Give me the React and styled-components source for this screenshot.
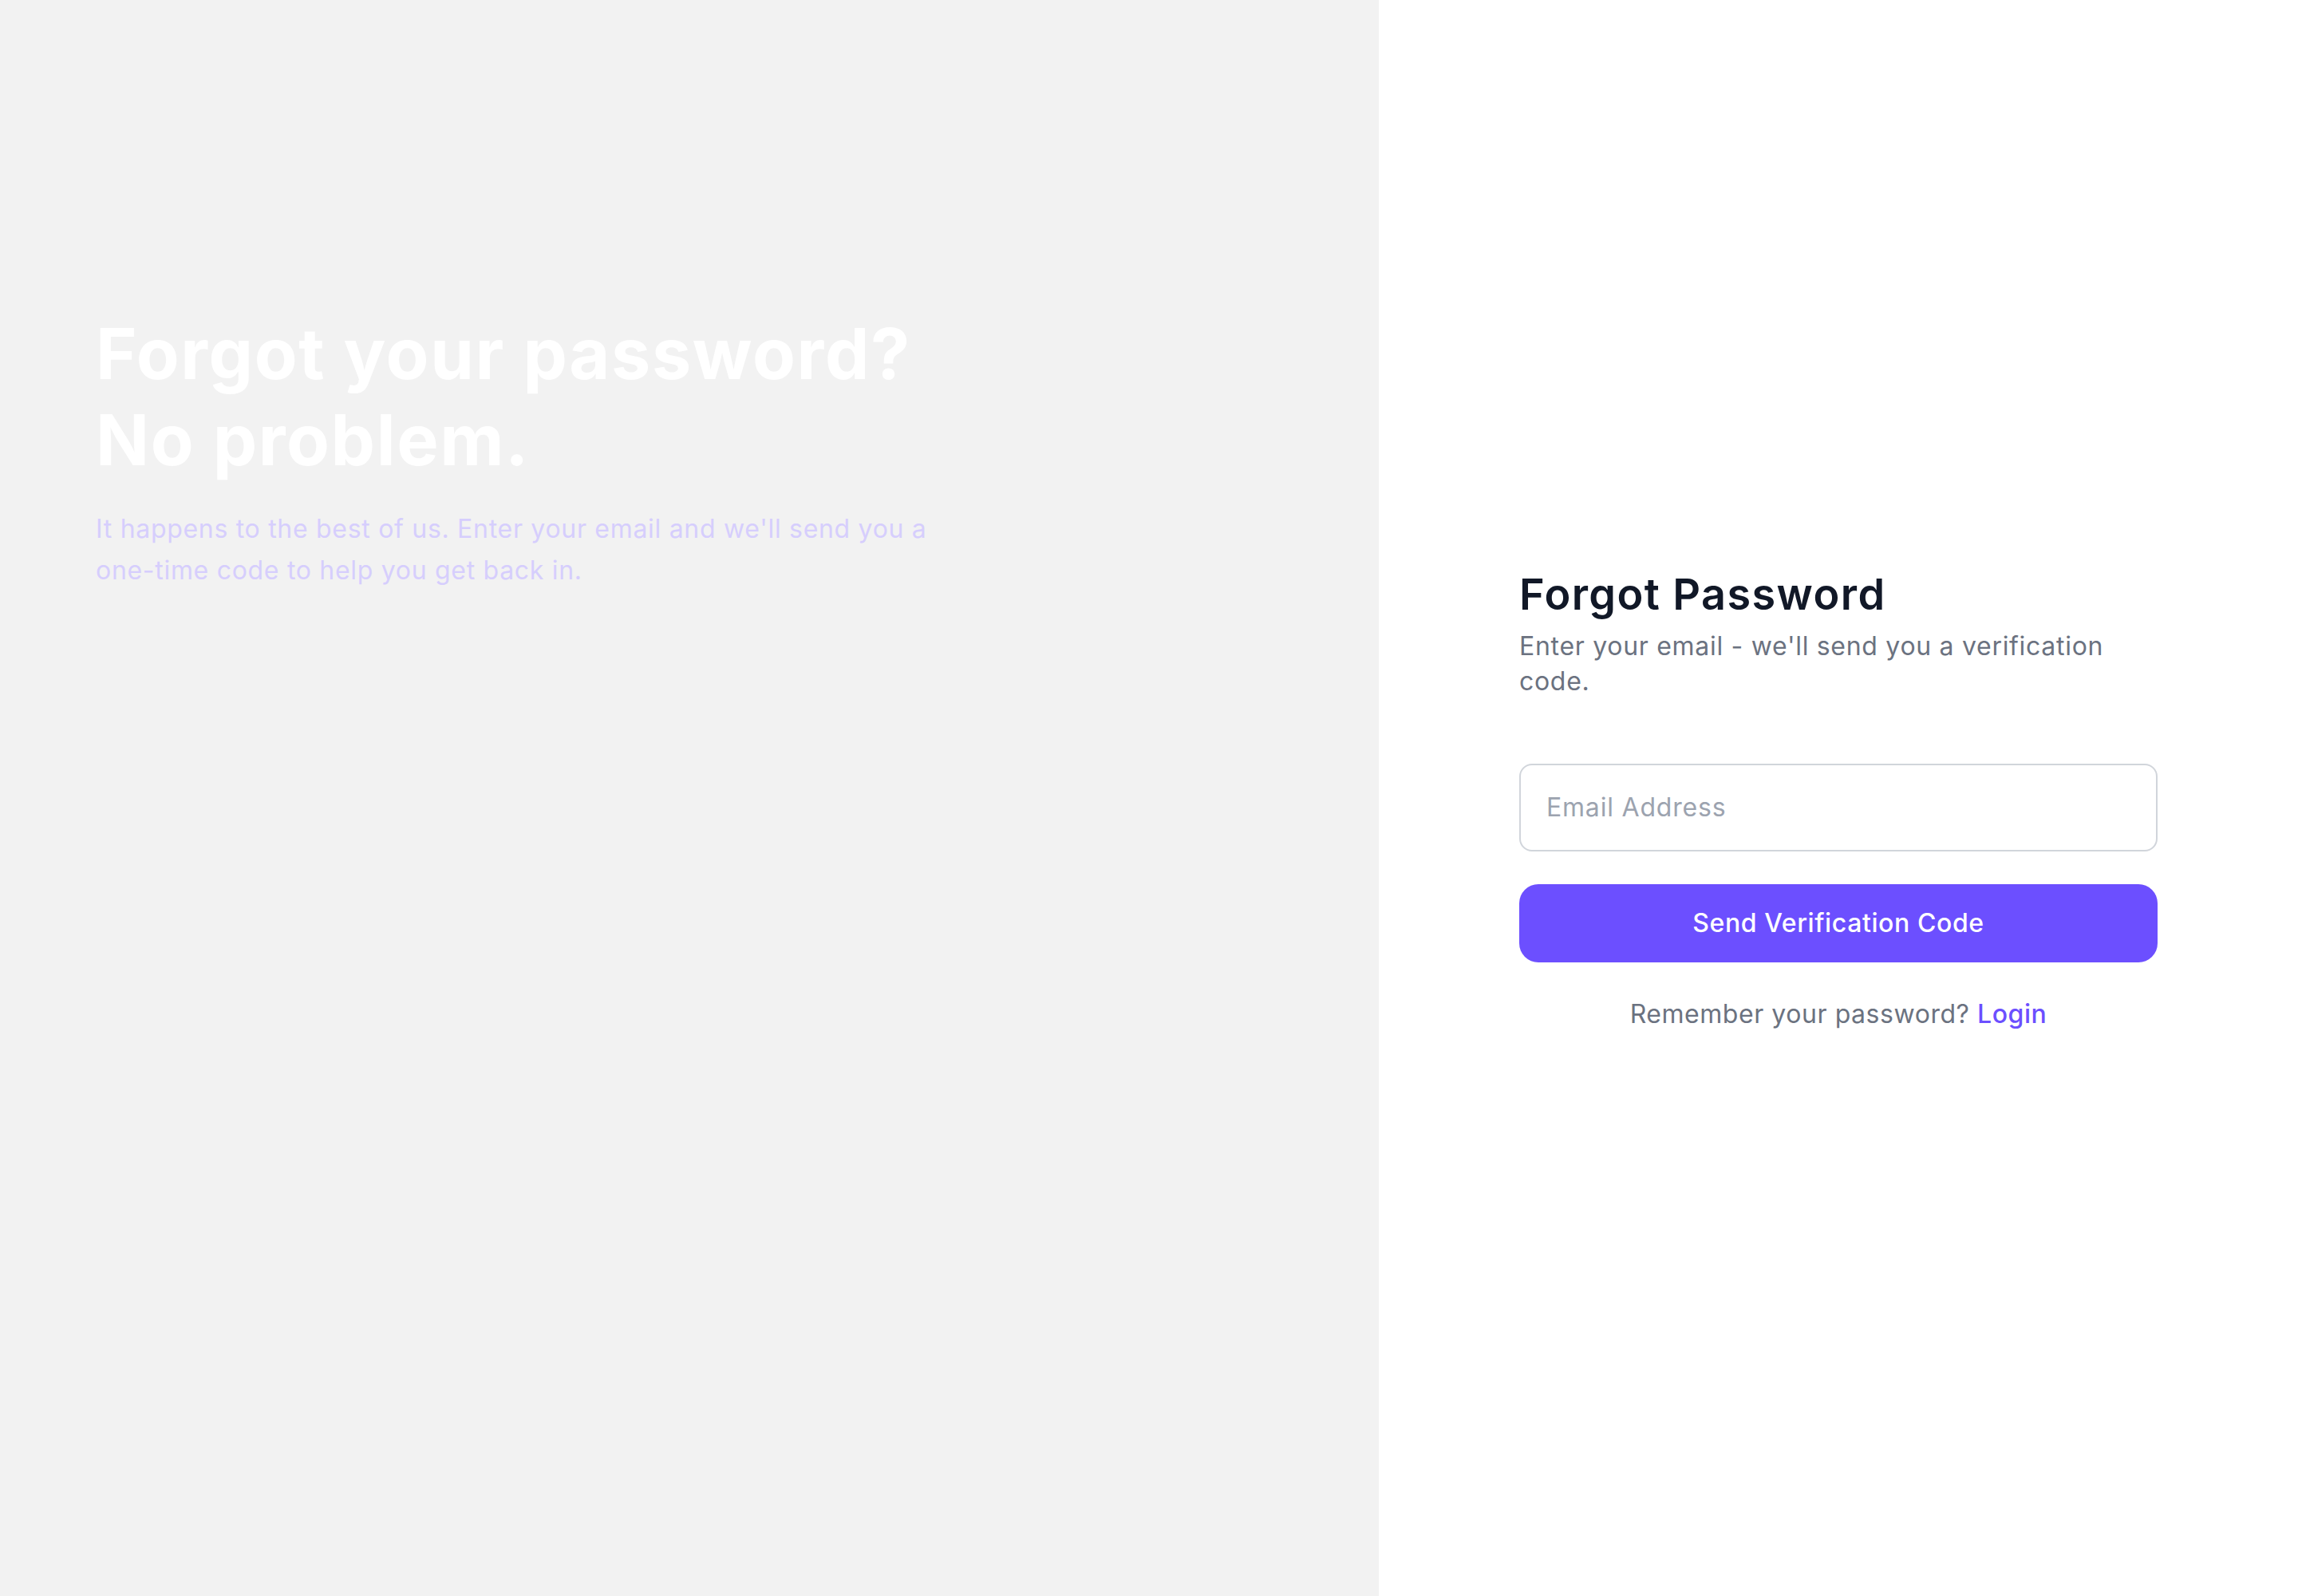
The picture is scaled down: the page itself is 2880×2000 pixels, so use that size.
import React from "react";
import styled, { createGlobalStyle } from "styled-components";

const GlobalStyle = createGlobalStyle`
  * {
    box-sizing: border-box;
  }
  html, body {
    margin: 0;
    padding: 0;
    background: #fff;
    font-family: Inter, "Noto Sans", "Liberation Sans", sans-serif;
  }
`;

// two columns: 60 / 40
const Page = styled.main`
  display: grid;
  grid-template-columns: 60% 40%;
  min-height: 100vh;
`;

const Hero = styled.section`
  background: #f2f2f2;
  padding: 389px 120px 0;
`;

const HeroTitle = styled.h1`
  margin: 0;
  max-width: 1152px;
  color: #ffffff;
  font-size: 88px;
  font-weight: 700;
  line-height: 108px;
  letter-spacing: 1.6px;
`;

const HeroText = styled.p`
  margin: 32px 0 0;
  max-width: 1070px;
  color: #d6cefd;
  font-size: 32px;
  line-height: 52px;
  letter-spacing: 0.7px;
`;

const FormPanel = styled.section`
  display: flex;
  align-items: center;
  justify-content: center;
  background: #fff;
`;

const Form = styled.form`
  width: 800px;
  padding-top: 4px;
  display: flex;
  flex-direction: column;
`;

const Title = styled.h2`
  margin: 0;
  color: #111827;
  font-size: 54px;
  font-weight: 600;
  line-height: 65px;
  letter-spacing: 1.4px;
`;

const Subtitle = styled.p`
  margin: 11px 0 0;
  max-width: 770px;
  color: #6b7280;
  font-size: 32px;
  line-height: 44px;
  letter-spacing: 0.7px;
`;

const EmailInput = styled.input`
  margin-top: 81px;
  height: 110px;
  width: 100%;
  padding: 0 32px;
  border: 2px solid #d1d5db;
  border-radius: 16px;
  background: #fff;
  color: #111827;
  font-family: inherit;
  font-size: 32px;
  letter-spacing: 0.8px;
  outline: none;

  &::placeholder {
    color: #9ca3af;
  }
`;

const SubmitButton = styled.button`
  margin-top: 41px;
  height: 98px;
  width: 100%;
  border: none;
  border-radius: 24px;
  background: #6c4fff;
  color: #fff;
  font-family: inherit;
  font-size: 32px;
  font-weight: 500;
  letter-spacing: 0.6px;
  cursor: pointer;
`;

const Footer = styled.p`
  margin: 43px 0 0;
  text-align: center;
  color: #6b7280;
  font-size: 32px;
  line-height: 44px;
  letter-spacing: 0.55px;
`;

const LoginLink = styled.a`
  color: #6c4fff;
  font-weight: 500;
  text-decoration: none;
`;

export default function App() {
  return (
    <>
      <GlobalStyle />
      <Page>
        <Hero>
          <HeroTitle>
            Forgot your password?
            <br />
            No problem.
          </HeroTitle>
          <HeroText>
            It happens to the best of us. Enter your email and we'll send you a
            one-time code to help you get back in.
          </HeroText>
        </Hero>

        <FormPanel>
          <Form onSubmit={(e) => e.preventDefault()}>
            <Title>Forgot Password</Title>
            <Subtitle>
              Enter your email - we'll send you a verification code.
            </Subtitle>
            <EmailInput type="email" placeholder="Email Address" />
            <SubmitButton type="submit">Send Verification Code</SubmitButton>
            <Footer>
              Remember your password? <LoginLink href="#">Login</LoginLink>
            </Footer>
          </Form>
        </FormPanel>
      </Page>
    </>
  );
}
